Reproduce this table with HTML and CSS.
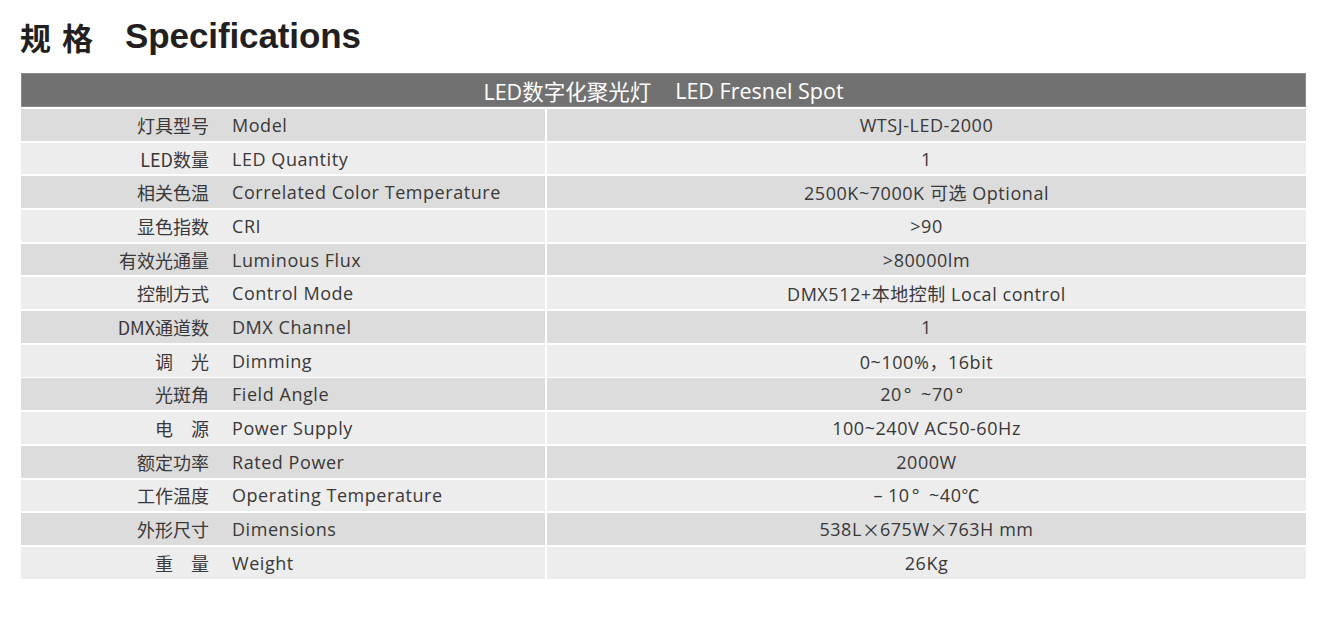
FILE: index.html
```html
<!DOCTYPE html>
<html lang="zh">
<head>
<meta charset="utf-8">
<title>规格 Specifications</title>
<link rel="stylesheet" href="styles.css">
</head>
<body>
<div class="page">
  <h1 class="title"><span class="title-cn">规<span class="cn-gap"></span>格</span><span class="title-en">Specifications</span></h1>
  <div class="spec">
    <div class="spec-head">LED数字化聚光灯<span class="head-gap"></span>LED Fresnel Spot</div>

    <div class="row dark"><div class="key"><span class="cn">灯具型号</span><span class="en">Model</span></div><div class="val">WTSJ-LED-2000</div></div>
    <div class="row light"><div class="key"><span class="cn">LED数量</span><span class="en">LED Quantity</span></div><div class="val">1</div></div>
    <div class="row dark"><div class="key"><span class="cn">相关色温</span><span class="en">Correlated Color Temperature</span></div><div class="val">2500K~7000K 可选 Optional</div></div>
    <div class="row light"><div class="key"><span class="cn">显色指数</span><span class="en">CRI</span></div><div class="val">&gt;90</div></div>
    <div class="row dark"><div class="key"><span class="cn">有效光通量</span><span class="en">Luminous Flux</span></div><div class="val">&gt;80000lm</div></div>
    <div class="row light"><div class="key"><span class="cn">控制方式</span><span class="en">Control Mode</span></div><div class="val">DMX512+本地控制 Local control</div></div>
    <div class="row dark"><div class="key"><span class="cn">DMX通道数</span><span class="en">DMX Channel</span></div><div class="val">1</div></div>
    <div class="row light"><div class="key"><span class="cn">调　光</span><span class="en">Dimming</span></div><div class="val">0~100%，16bit</div></div>
    <div class="row dark"><div class="key"><span class="cn">光斑角</span><span class="en">Field Angle</span></div><div class="val">20<span class="deg">°</span>~70<span class="deg">°</span></div></div>
    <div class="row light"><div class="key"><span class="cn">电　源</span><span class="en">Power Supply</span></div><div class="val">100~240V AC50-60Hz</div></div>
    <div class="row dark"><div class="key"><span class="cn">额定功率</span><span class="en">Rated Power</span></div><div class="val">2000W</div></div>
    <div class="row light"><div class="key"><span class="cn">工作温度</span><span class="en">Operating Temperature</span></div><div class="val"><span class="minus">–</span>10<span class="deg">°</span>~40<span class="cjk">℃</span></div></div>
    <div class="row dark"><div class="key"><span class="cn">外形尺寸</span><span class="en">Dimensions</span></div><div class="val">538L<span class="cjk">×</span>675W<span class="cjk">×</span>763H mm</div></div>
    <div class="row light"><div class="key"><span class="cn">重　量</span><span class="en">Weight</span></div><div class="val">26Kg</div></div>
  </div>
</div>
</body>
</html>
```
FILE: styles.css
```css
html, body {
  margin: 0;
  padding: 0;
  background: #ffffff;
}

.page {
  padding: 15px 23px 0 21px;
  width: 1285px;
}

.title {
  margin: 0 0 16px 0;
  height: 42px;
  display: flex;
  align-items: center;
  font-weight: bold;
  color: #231f20;
}

.title-cn {
  font-family: "Noto Sans CJK SC", sans-serif;
  font-size: 31px;
  font-weight: 700;
  margin-left: -1px;
  display: flex;
}

.cn-gap {
  display: inline-block;
  width: 11px;
}

.title-en {
  font-family: "Liberation Sans", Arial, sans-serif;
  font-size: 35px;
  font-weight: 700;
  margin-left: 32px;
  letter-spacing: -0.1px;
}

.spec {
  display: flex;
  flex-direction: column;
  gap: 1.95px;
}

.spec-head {
  height: 34px;
  box-sizing: border-box;
  background: #727171;
  border: 1px solid #8a8989;
  color: #ffffff;
  font-family: "Open Sans", "Noto Sans CJK SC", sans-serif;
  font-size: 21.5px;
  display: flex;
  align-items: center;
  justify-content: center;
}

.head-gap {
  display: inline-block;
  width: 24px;
}

.row {
  height: 31.75px;
  display: grid;
  grid-template-columns: 524px 1fr;
  column-gap: 2px;
  color: #3a3838;
  font-family: "Open Sans", "Noto Sans CJK SC", sans-serif;
  font-size: 18px;
  letter-spacing: 0.55px;
}

.row > div {
  display: flex;
  align-items: center;
}

.dark > div {
  background: #dcdcdc;
}

.light > div {
  background: #ededed;
}

.key .cn {
  width: 188px;
  text-align: right;
  font-family: "Noto Sans CJK SC", sans-serif;
  font-weight: 400;
  font-size: 18px;
  letter-spacing: 0;
}

.key .en {
  margin-left: 23px;
}

.val {
  justify-content: center;
}

.deg {
  margin-right: 9px;
  margin-left: 2px;
}

.minus {
  margin-right: 5px;
}

.cjk {
  font-family: "Noto Sans CJK SC", sans-serif;
  letter-spacing: 0;
}
```
